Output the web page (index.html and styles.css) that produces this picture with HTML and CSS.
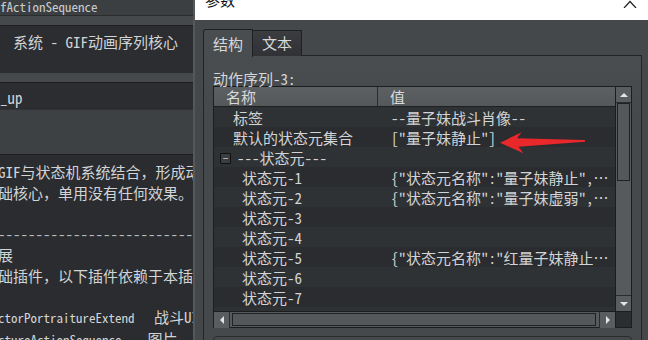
FILE: index.html
```html
<!DOCTYPE html>
<html>

<head>
    <title>参数</title>
    <link rel="stylesheet" href="styles.css">
</head>

<body>
    <div class="editor">
        <div class="editor-title">fActionSequence</div>
        <div class="editor-band"></div>
        <div class="editor-field tall">系统 - GIF动画序列核心</div>
        <div class="editor-band"></div>
        <div class="editor-field">_up</div>
        <div class="editor-band big"></div>
        <div class="editor-help">
            <p>GIF与状态机系统结合，形成动</p>
            <p>础核心，单用没有任何效果。</p>
            <p>&nbsp;</p>
            <p class="dashes">----------------------------------------</p>
            <p>展</p>
            <p>础插件，以下插件依赖于本插件</p>
            <p>&nbsp;</p>
            <p><span class="code">ctorPortraitureExtend   </span>战斗UI</p>
            <p><span class="code">ctureActionSequence    </span>图片</p>
        </div>
    </div>

    <div class="dialog">
        <div class="dialog-title">
            <span class="dialog-name">参数</span>
            <svg class="close" width="14" height="8" viewBox="0 0 14 8">
                <path d="M1 8 L7 1.5 L13 8" fill="none" stroke="#222" stroke-width="1.2" />
            </svg>
        </div>
        <div class="dialog-body">
            <div class="tabs">
                <div class="tab active">结构</div>
                <div class="tab">文本</div>
            </div>
            <div class="tab-panel">
                <div class="caption">动作序列-3:</div>
                <div class="tree">
                    <div class="tree-view">
                        <div class="tree-head">
                            <div class="col-name">名称</div>
                            <div class="col-value">值</div>
                        </div>
                        <div class="row">
                            <div class="col-name lvl1">标签</div>
                            <div class="col-value">--量子妹战斗肖像--</div>
                        </div>
                        <div class="row">
                            <div class="col-name lvl1">默认的状态元集合</div>
                            <div class="col-value">["量子妹静止"]</div>
                        </div>
                        <div class="row">
                            <div class="col-name group"><span class="toggle">−</span>---状态元---</div>
                            <div class="col-value"></div>
                        </div>
                        <div class="row">
                            <div class="col-name lvl2">状态元-1</div>
                            <div class="col-value">{"状态元名称":"量子妹静止","可被动作元打断":"true"}</div>
                        </div>
                        <div class="row">
                            <div class="col-name lvl2">状态元-2</div>
                            <div class="col-value">{"状态元名称":"量子妹虚弱","可被动作元打断":"true"}</div>
                        </div>
                        <div class="row">
                            <div class="col-name lvl2">状态元-3</div>
                            <div class="col-value"></div>
                        </div>
                        <div class="row">
                            <div class="col-name lvl2">状态元-4</div>
                            <div class="col-value"></div>
                        </div>
                        <div class="row">
                            <div class="col-name lvl2">状态元-5</div>
                            <div class="col-value">{"状态元名称":"红量子妹静止","可被动作元打断":"true"}</div>
                        </div>
                        <div class="row">
                            <div class="col-name lvl2">状态元-6</div>
                            <div class="col-value"></div>
                        </div>
                        <div class="row">
                            <div class="col-name lvl2">状态元-7</div>
                            <div class="col-value"></div>
                        </div>
                        <div class="row"></div>
                    </div>
                    <div class="vscroll">
                        <div class="sbtn"><span class="tri up"></span></div>
                        <div class="vtrack"><div class="vthumb"></div></div>
                        <div class="sbtn"><span class="tri down"></span></div>
                    </div>
                    <div class="hscroll">
                        <div class="sbtn"><span class="tri left"></span></div>
                        <div class="htrack"><div class="hthumb"></div></div>
                        <div class="sbtn"><span class="tri right"></span></div>
                    </div>
                    <div class="corner"></div>
                </div>
                <div class="next-box"></div>
            </div>
        </div>
    </div>

    <svg class="arrow" width="90" height="26" viewBox="0 0 90 26">
        <polygon points="2,12.7 23.7,2.3 19,8.3 87,10 87,11.7 20.5,16.7 25.3,23.3" fill="#e8282b" />
    </svg>
</body>

</html>
```

FILE: styles.css
```css
body {
    margin: 0;
    width: 648px;
    height: 340px;
    overflow: hidden;
    display: flex;
    position: relative;
    background-color: #45484b;
    font-family: "Noto Sans Mono CJK SC", "Noto Sans CJK SC", sans-serif;
    font-size: 15px;
    color: #d2d4d6;
}

/* editor window behind the dialog */
.editor {
    width: 193px;
    height: 340px;
    flex: none;
    display: flex;
    flex-direction: column;
    overflow: hidden;
    border-right: 2px solid #55585b;
    background-color: #46494c;
}

.editor > div {
    flex: none;
}

.editor-title {
    height: 15px;
    line-height: 13px;
    font-size: 13px;
    color: #c9cbcd;
    background-color: #3c3f42;
    border-bottom: 1px solid #2a2c2e;
    white-space: nowrap;
}

.editor-band {
    height: 9px;
    background-color: #46494c;
}

.editor-band.big {
    height: 44px;
    background-color: #3e4144;
    border-top: 1px solid #2f3134;
}

.editor-field {
    height: 27px;
    box-sizing: border-box;
    padding: 5px 0 0 0;
    line-height: 20px;
    background-color: #2b2d30;
    border-top: 1px solid #1d1e20;
    white-space: nowrap;
}

.editor-field.tall {
    height: 48px;
    padding: 6px 0 0 13px;
}

.editor .editor-help {
    flex: 1;
    min-height: 0;
    overflow: hidden;
    padding-top: 7px;
    background-color: #2a2c2f;
    border-top: 1px solid #1d1e20;
}

.editor-help p {
    margin: 0 0 0 -2px;
    line-height: 20.7px;
    white-space: pre;
}

.editor-help .dashes {
    color: #b8babc;
}

.editor-help .code {
    font-size: 13px;
}

/* dialog */
.dialog {
    flex: 1;
    height: 340px;
    display: flex;
    flex-direction: column;
    overflow: hidden;
}

.dialog-title {
    height: 20px;
    flex: none;
    display: flex;
    align-items: flex-start;
    background-color: #fff;
    color: #111;
    padding-left: 10px;
    overflow: hidden;
}

.dialog-name {
    margin-top: -10px;
    line-height: 20px;
}

.close {
    margin-left: auto;
    margin-right: 11px;
}

.dialog-body {
    flex: 1;
    min-height: 0;
    overflow: hidden;
    padding: 9px 6px 0 8px;
    background-color: #45484b;
}

.tabs {
    display: flex;
    align-items: flex-start;
    height: 26px;
}

.tab {
    height: 25px;
    margin-top: 1px;
    padding: 0 9px;
    line-height: 24px;
    border: 1px solid #1f2022;
    border-bottom: none;
    border-left: none;
    background: linear-gradient(#3a3c3f, #303235);
    color: #d6d8da;
}

.tab.active {
    height: 27px;
    margin-top: 0;
    line-height: 27px;
    border-left: 1px solid #1f2022;
    border-radius: 3px 0 0 0;
    background: #4a4d50;
    position: relative;
    z-index: 1;
}

.tab-panel {
    height: 290px;
    padding: 0 9px 0 9px;
    border: 1px solid #222426;
    background: linear-gradient(#4a4d50, #46494c 60px);
}

.caption {
    padding-top: 15px;
    height: 15px;
    line-height: 15px;
    color: #d4d6d8;
}

/* tree widget */
.tree {
    display: grid;
    grid-template-columns: 1fr 16px;
    grid-template-rows: 224px 16px;
    border: 1px solid #1c1d1f;
    background-color: #2a2c2f;
}

.tree-view {
    overflow: hidden;
}

.tree-head,
.row {
    display: flex;
    height: 20px;
    box-sizing: border-box;
    padding-top: 1px;
    line-height: 19px;
    white-space: nowrap;
}

.tree-head {
    padding-top: 0;
    background: linear-gradient(#5d6063, #55585b);
    border-bottom: 1px solid #1f2022;
    color: #d8dadc;
}

.tree-head .col-name {
    padding-left: 12px;
    border-right: 1px solid #2a2c2e;
}

.tree-head .col-value {
    padding-left: 12px;
}

.col-name {
    width: 164px;
    flex: none;
    box-sizing: border-box;
}

.col-value {
    flex: 1;
    min-width: 0;
    padding-left: 13px;
    overflow: hidden;
    text-overflow: ellipsis;
}

.row {
    background-color: #2f3235;
}

.row:nth-child(odd) {
    background-color: #2a2c2f;
}

.lvl1 {
    padding-left: 19px;
}

.lvl2 {
    padding-left: 28px;
}

.group {
    display: flex;
    align-items: center;
    padding-left: 6px;
}

.toggle {
    width: 9px;
    height: 9px;
    margin: 1px 6px 0 0;
    border: 1px solid #111;
    border-radius: 1px;
    background-color: #3b3e41;
    color: #d0d0d0;
    font-size: 10px;
    line-height: 8px;
    text-align: center;
}

/* scrollbars */
.vscroll,
.hscroll {
    display: flex;
    background-color: #575a5d;
}

.vscroll {
    flex-direction: column;
    border-left: 1px solid #1c1d1f;
}

.hscroll {
    border-top: 1px solid #1c1d1f;
}

.sbtn {
    width: 16px;
    height: 16px;
    flex: none;
    display: flex;
    align-items: center;
    justify-content: center;
    background-color: #5a5d60;
    box-sizing: border-box;
}

.vscroll .sbtn {
    width: 15px;
}

.vscroll .sbtn:first-child {
    border-bottom: 1px solid #2a2c2e;
}

.vscroll .sbtn:last-child {
    border-top: 1px solid #2a2c2e;
}

.hscroll .sbtn:first-child {
    border-right: 1px solid #2a2c2e;
}

.hscroll .sbtn:last-child {
    border-left: 1px solid #2a2c2e;
}

.tri {
    width: 0;
    height: 0;
    border: 4px solid transparent;
}

.tri.up {
    border-bottom-color: #e4e4e4;
    border-top-width: 0;
}

.tri.down {
    border-top-color: #e4e4e4;
    border-bottom-width: 0;
}

.tri.left {
    border-right-color: #e4e4e4;
    border-left-width: 0;
}

.tri.right {
    border-left-color: #e4e4e4;
    border-right-width: 0;
}

.vtrack,
.htrack {
    flex: 1;
    display: flex;
}

.vtrack {
    flex-direction: column;
    padding: 0 1px;
}

.vthumb {
    height: 76px;
    border: 1px solid #202123;
    background-color: #55585b;
}

.htrack {
    padding: 1px 3px 1px 2px;
}

.hthumb {
    flex: 1;
    border: 1px solid #202123;
    background-color: #55585b;
}

.corner {
    border-top: 1px solid #1c1d1f;
    border-left: 1px solid #1c1d1f;
    background-color: #2c2d2e;
}

.next-box {
    height: 20px;
    margin-top: 8px;
    border: 1px solid #2a2c2e;
    border-radius: 4px;
}

/* annotation */
.arrow {
    position: absolute;
    left: 498px;
    top: 130px;
}
```
